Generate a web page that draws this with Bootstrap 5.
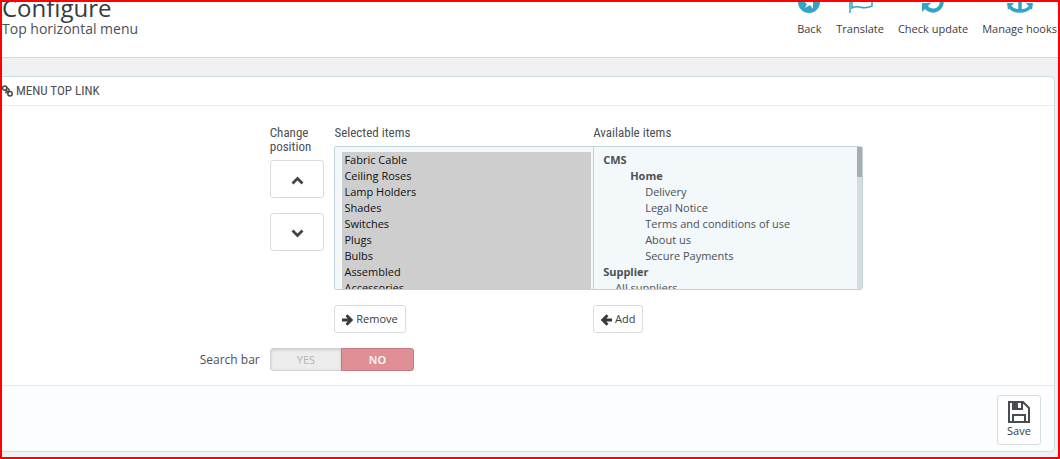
<!DOCTYPE html>
<html lang="en">
<head>
<meta charset="utf-8">
<meta name="viewport" content="width=device-width, initial-scale=1">
<title>Configure - Top horizontal menu</title>
<link href="https://cdn.jsdelivr.net/npm/bootstrap@5.3.0/dist/css/bootstrap.min.css" rel="stylesheet">
<style>
  body { font-family: "Open Sans", sans-serif; font-size: 12px; line-height: 16px; color: #4c4f55; background: #eff1f2; }
  .shell { border: 2px solid #f00; }
  .page-head { height: 56px; background: #fff; border-bottom: 1px solid #d3d8db; }
  .page-title { font-size: 24px; line-height: 26px; color: #363a41; }
  .page-sub { font-size: 14px; line-height: 16px; font-weight: 400; color: #4c5057; }
  .tools { gap: 14px; padding-right: 1px; }
  .tool-link { font-size: 11px; color: #3a3d42; text-decoration: none; }
  .tool-link svg { width: 26px; height: 26px; color: #31a5c5; }
  .panel { margin: 18px 3px 0 0; background: #fff; border: 1px solid #cbdde0; border-left: 0; border-radius: 0 5px 5px 0; }
  .narrow { font-family: "Ubuntu Condensed", "Roboto Condensed", "Open Sans", sans-serif; font-size: 13px; line-height: 14px; font-weight: 400; color: #4c4f55; }
  .panel-title { height: 29px; border-bottom: 1px solid #eaedef; gap: 3px; }
  .panel-main { padding: 20px 13px 14px 4px; }
  .tight { --bs-gutter-x: 10px; }
  .head-gap { margin-bottom: 6px; }
  .block-gap { margin-bottom: 15px; }
  .row-gap-top { padding-top: 15px; }
  .list-box { height: 144px; padding: 5px 0 0 7px; font-size: 11px; color: #4c4f55; background: #f3f8fa; border: 1px solid #c0d3d8; border-radius: 3px; overflow-y: auto; }
  .list-box option { min-height: 16px; height: 16px; line-height: 16px; padding: 0 2px; }
  .list-chosen { width: 266px; padding-right: 9px; border-right: 0; scrollbar-width: none; }
  .list-wrap { width: 270px; z-index: 1; }
  .list-free { padding-left: 8px; }
  .list-free option.lvl-0 { font-weight: 700; padding-left: 1px; }
  .list-free option.lvl-all { padding-left: 13px; }
  .list-free option.lvl-1 { font-weight: 700; padding-left: 28px; }
  .list-free option.lvl-2 { padding-left: 43px; }
  .scroll-track { top: 1px; right: 1px; bottom: 1px; width: 5px; background: #d9dcdd; pointer-events: none; }
  .scroll-thumb { height: 30px; background: #a9adaf; }
  .act { --bs-btn-font-size: 11px; --bs-btn-line-height: 16px; --bs-btn-color: #363a41; --bs-btn-bg: #fff; --bs-btn-border-color: #d9dcde; --bs-btn-hover-bg: #f3f8fa; --bs-btn-hover-border-color: #c0d3d8; --bs-btn-border-radius: 3px; --bs-btn-padding-x: 7px; --bs-btn-padding-y: 5px; }
  .act-move { height: 38px; }
  .act-save { width: 44px; height: 50px; --bs-btn-padding-x: 0; }
  .toggle { width: 144px; }
  .toggle .btn { --bs-btn-font-size: 11px; --bs-btn-line-height: 16px; --bs-btn-padding-y: 3px; --bs-btn-color: #b4b4b4; --bs-btn-bg: #ededed; --bs-btn-border-color: #d2d2d2; --bs-btn-border-radius: 3px; --bs-btn-active-color: #fff; --bs-btn-active-bg: #e08f95; --bs-btn-active-border-color: #c9777e; width: 72px; height: 23px; }
  .toggle .toggle-yes { box-shadow: inset 0 1px 3px #c8c8c8; }
  .toggle .toggle-no { font-weight: 600; }
  .panel-end { height: 66px; background: #fcfdfe; border-top: 1px solid #e4ebf0; padding: 9px 13px; border-radius: 0 0 5px 0; }
</style>
</head>
<body>
<div class="shell min-vh-100 overflow-hidden">
  <header class="page-head d-flex justify-content-between align-items-end overflow-hidden">
    <div class="pb-3 mb-1">
      <h1 class="page-title m-0">Configure</h1>
      <h2 class="page-sub m-0">Top horizontal menu</h2>
    </div>
    <nav class="tools d-flex text-center pb-3 mb-1" aria-label="Module tools">
      <a class="tool-link d-flex flex-column align-items-center gap-2" href="#">
        <svg viewBox="0 0 26 26" aria-hidden="true"><circle cx="13" cy="15" r="11" fill="currentColor"/><path d="M6 13h11v9l-3-4-5 3 2-4Z" fill="#fff"/></svg>Back</a>
      <a class="tool-link d-flex flex-column align-items-center gap-2" href="#">
        <svg viewBox="0 0 26 26" fill="none" stroke="currentColor" stroke-width="1.5" aria-hidden="true"><path d="M3 3v23M5 6c5-4 10 3 20-1v14c-10 5-13-2-20 2Z"/></svg>Translate</a>
      <a class="tool-link d-flex flex-column align-items-center gap-2" href="#">
        <svg viewBox="0 0 26 26" aria-hidden="true"><path d="M4 12a9 9 0 0 1 16-5M22 15c-2 11-12 10-16 5" fill="none" stroke="currentColor" stroke-width="4"/><path d="M23 3v8h-8ZM2 25v-9h9Z" fill="currentColor"/></svg>Check update</a>
      <a class="tool-link d-flex flex-column align-items-center gap-2" href="#">
        <svg viewBox="0 0 26 26" aria-hidden="true"><path d="M13 6v18M8 11h10M3 20q3 4 10 4t10-4" fill="none" stroke="currentColor" stroke-width="3.5"/><circle cx="13" cy="4" r="2.500" fill="none" stroke="currentColor" stroke-width="2"/><path d="M0 16h7l-6 7ZM26 16h-7l6 7Z" fill="currentColor"/></svg>Manage hooks</a>
    </nav>
  </header>

  <main class="panel">
    <h3 class="panel-title narrow d-flex align-items-center m-0">
      <svg width="11" height="12" viewBox="0 0 11 12" fill="none" stroke="#444" stroke-width="1.500" aria-hidden="true"><circle cx="2.700" cy="3.200" r="2.100"/><circle cx="8" cy="8.700" r="2.200"/><path d="M3.500 4.500l3.500 3.500M5 2.500l2 2v2M3.500 6.500l1 2"/></svg>MENU TOP LINK</h3>
    <form>
      <div class="panel-main">
        <div class="row tight m-0">
          <div class="col-9 offset-3 p-0">
            <div class="row tight m-0 flex-nowrap">
              <div class="col-1 d-flex flex-column">
                <h4 class="narrow head-gap">Change position</h4>
                <button type="button" class="btn act act-move block-gap w-100" aria-label="Move up"><svg width="13" height="9" viewBox="0 0 13 9" fill="none" stroke="#444" stroke-width="2.800" aria-hidden="true"><path d="M1.500 7.500l5-5 5 5"/></svg></button>
                <button type="button" class="btn act act-move w-100" aria-label="Move down"><svg width="13" height="9" viewBox="0 0 13 9" fill="none" stroke="#444" stroke-width="2.800" aria-hidden="true"><path d="M1.500 1.500l5 5 5-5"/></svg></button>
              </div>
              <div class="col-4">
                <label class="narrow d-block head-gap" for="chosen">Selected items</label>
                <select class="list-box list-chosen d-block block-gap" id="chosen" multiple>
                  <option selected>Fabric Cable</option><option selected>Ceiling Roses</option><option selected>Lamp Holders</option><option selected>Shades</option><option selected>Switches</option><option selected>Plugs</option><option selected>Bulbs</option><option selected>Assembled</option><option selected>Accessories</option>
                </select>
                <button type="button" class="btn act"><svg width="11" height="12" viewBox="0 0 11 12" fill="none" stroke="#363a41" stroke-width="2.800" aria-hidden="true"><path d="M0 6h9M4.500 1.300L9.200 6l-4.700 4.700"/></svg> Remove</button>
              </div>
              <div class="col-4">
                <label class="narrow d-block head-gap" for="free">Available items</label>
                <div class="list-wrap position-relative block-gap">
                  <select class="list-box list-free d-block w-100" id="free" multiple>
                    <option class="lvl-0">CMS</option><option class="lvl-1">Home</option><option class="lvl-2">Delivery</option><option class="lvl-2">Legal Notice</option><option class="lvl-2">Terms and conditions of use</option><option class="lvl-2">About us</option><option class="lvl-2">Secure Payments</option><option class="lvl-0">Supplier</option><option class="lvl-all">All suppliers</option>
                  </select>
                  <div class="scroll-track position-absolute" aria-hidden="true"><div class="scroll-thumb"></div></div>
                </div>
                <button type="button" class="btn act"><svg width="11" height="12" viewBox="0 0 11 12" fill="none" stroke="#363a41" stroke-width="2.800" aria-hidden="true"><path d="M11 6H2M6.500 1.300L1.800 6l4.700 4.700"/></svg> Add</button>
              </div>
            </div>
          </div>
        </div>
        <div class="row tight m-0 row-gap-top align-items-center">
          <div class="col-3 text-end" id="search-label">Search bar</div>
          <div class="col-9">
            <div class="toggle btn-group d-flex" role="group" aria-labelledby="search-label">
              <input class="btn-check" type="radio" name="search" id="yes"><label class="btn toggle-yes" for="yes">YES</label>
              <input class="btn-check" type="radio" name="search" id="no" checked><label class="btn toggle-no" for="no">NO</label>
            </div>
          </div>
        </div>
      </div>
      <div class="panel-end text-end">
        <button type="submit" class="btn act act-save"><svg class="d-block mx-auto" width="22" height="22" viewBox="0 0 22 22" fill="none" stroke="#4a4b52" stroke-width="2" aria-hidden="true"><path d="M1 1h14l6 6v14H1ZM5 21v-7h12v7M5 1v7h9V1"/><path d="M5 1h5v7H5Z" fill="#4a4b52" stroke="none"/></svg>Save</button>
      </div>
    </form>
  </main>
</div>
<script src="https://cdn.jsdelivr.net/npm/bootstrap@5.3.0/dist/js/bootstrap.bundle.min.js"></script>
</body>
</html>
